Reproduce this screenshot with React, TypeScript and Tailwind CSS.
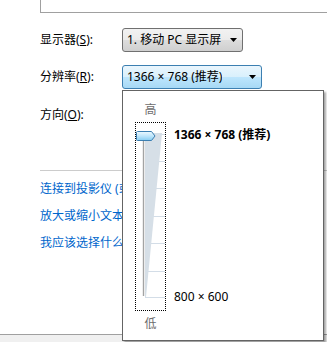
const Arrow = () => (
  <svg width="7" height="4" viewBox="0 0 7 4" className="flex-none">
    <path d="M0 0h7L3.5 4z" fill="#000" />
  </svg>
);

const SliderDrawing = () => {
  const ticks = [12, 39, 66, 94, 121, 149, 175];
  return (
    <svg width="29" height="187" viewBox="1 1 29 187" className="block">
      <defs>
        <linearGradient id="thumb" x1="0" y1="0" x2="0" y2="1">
          <stop offset="0" stopColor="#eefaff" />
          <stop offset="0.5" stopColor="#bfe6fb" />
          <stop offset="1" stopColor="#86cdf2" />
        </linearGradient>
      </defs>
      {ticks.map((y) => (
        <line key={y} x1="10" y1={y + 0.5} x2="30" y2={y + 0.5} stroke="#d3dde7" strokeWidth="1" />
      ))}
      <polygon points="10,11 27,11 11,175 10,175" fill="#d6dfe7" />
      <line x1="8.5" y1="12" x2="8.5" y2="174" stroke="#a3a3a3" strokeWidth="1.4" />
      <path
        d="M2.5 9.5 Q1.5 9.5 1.5 10.5 L1.5 17.5 Q1.5 18.5 2.5 18.5 L16.5 18.5 L20 14 L16.5 9.5 Z"
        fill="url(#thumb)"
        stroke="#3c7fb1"
        strokeWidth="1"
      />
    </svg>
  );
};

export default function App() {
  return (
    <div className="relative flex h-[342px] w-[327px] flex-col overflow-hidden bg-white font-['Noto_Sans','Noto_Sans_CJK_SC',sans-serif] text-[12px] text-black">
      <div className="ml-[40px] h-[13px] flex-none border-b border-l border-[#a0a0a0]" />

      <div className="flex flex-col pl-[40px] pt-[15px]">
        <div className="flex h-[24px] items-center">
          <span className="w-[82px] flex-none">
            显示器(<span className="underline">S</span>):
          </span>
          <div className="flex h-[24px] w-[121px] items-center justify-between rounded-[3px] border border-[#707070] bg-[linear-gradient(#f2f2f2_0%,#ebebeb_49%,#dddddd_50%,#cfcfcf_100%)] pl-[4px] pr-[5px]">
            <span className="truncate">1. 移动 PC 显示屏</span>
            <Arrow />
          </div>
        </div>

        <div className="mt-[13px] flex h-[24px] items-center">
          <span className="w-[82px] flex-none">
            分辨率(<span className="underline">R</span>):
          </span>
          <div className="flex h-[24px] w-[140px] items-center justify-between rounded-[3px] border border-[#3c7fb1] bg-[linear-gradient(#eaf6fd_0%,#d9f0fc_49%,#bee6fd_50%,#a7d9f5_100%)] pl-[4px] pr-[5px]">
            <span className="truncate">1366 × 768 (推荐)</span>
            <Arrow />
          </div>
        </div>

        <div className="mt-[14px] flex h-[24px] items-center">
          <span className="w-[82px] flex-none">
            方向(<span className="underline">O</span>):
          </span>
        </div>
      </div>

      <div className="ml-[40px] mt-[43px] border-t border-[#cccccc]" />

      <div className="flex flex-col gap-[11px] whitespace-nowrap pl-[40px] pt-[10px] text-[#0066cc]">
        <span className="leading-[16px]">连接到投影仪 (或按 Windows 徽标键 + P)</span>
        <span className="leading-[16px]">放大或缩小文本和其他项目</span>
        <span className="leading-[16px]">我应该选择什么显示器设置?</span>
      </div>

      <div className="mt-auto h-[8px] flex-none border-t border-[#a0a0a0] bg-[#f0f0f0]" />

      <div className="absolute left-[122px] top-[90px] flex h-[251px] w-[202px] border border-[#646464] bg-white shadow-[2px_2px_2px_rgba(0,0,0,0.35)]">
        <div className="flex flex-col items-center pl-[12px] pt-[11px]">
          <span className="leading-[16px] text-[#6d6d6d]">高</span>
          <div className="mt-[4px] h-[189px] w-[31px] border border-dotted border-black">
            <SliderDrawing />
          </div>
          <span className="mt-[5px] leading-[16px] text-[#6d6d6d]">低</span>
        </div>
        <div className="ml-[8px] flex h-[214px] flex-col justify-between pt-[36px] leading-[16px]">
          <span className="font-bold">1366 × 768 (推荐)</span>
          <span>800 × 600</span>
        </div>
      </div>
    </div>
  );
}
